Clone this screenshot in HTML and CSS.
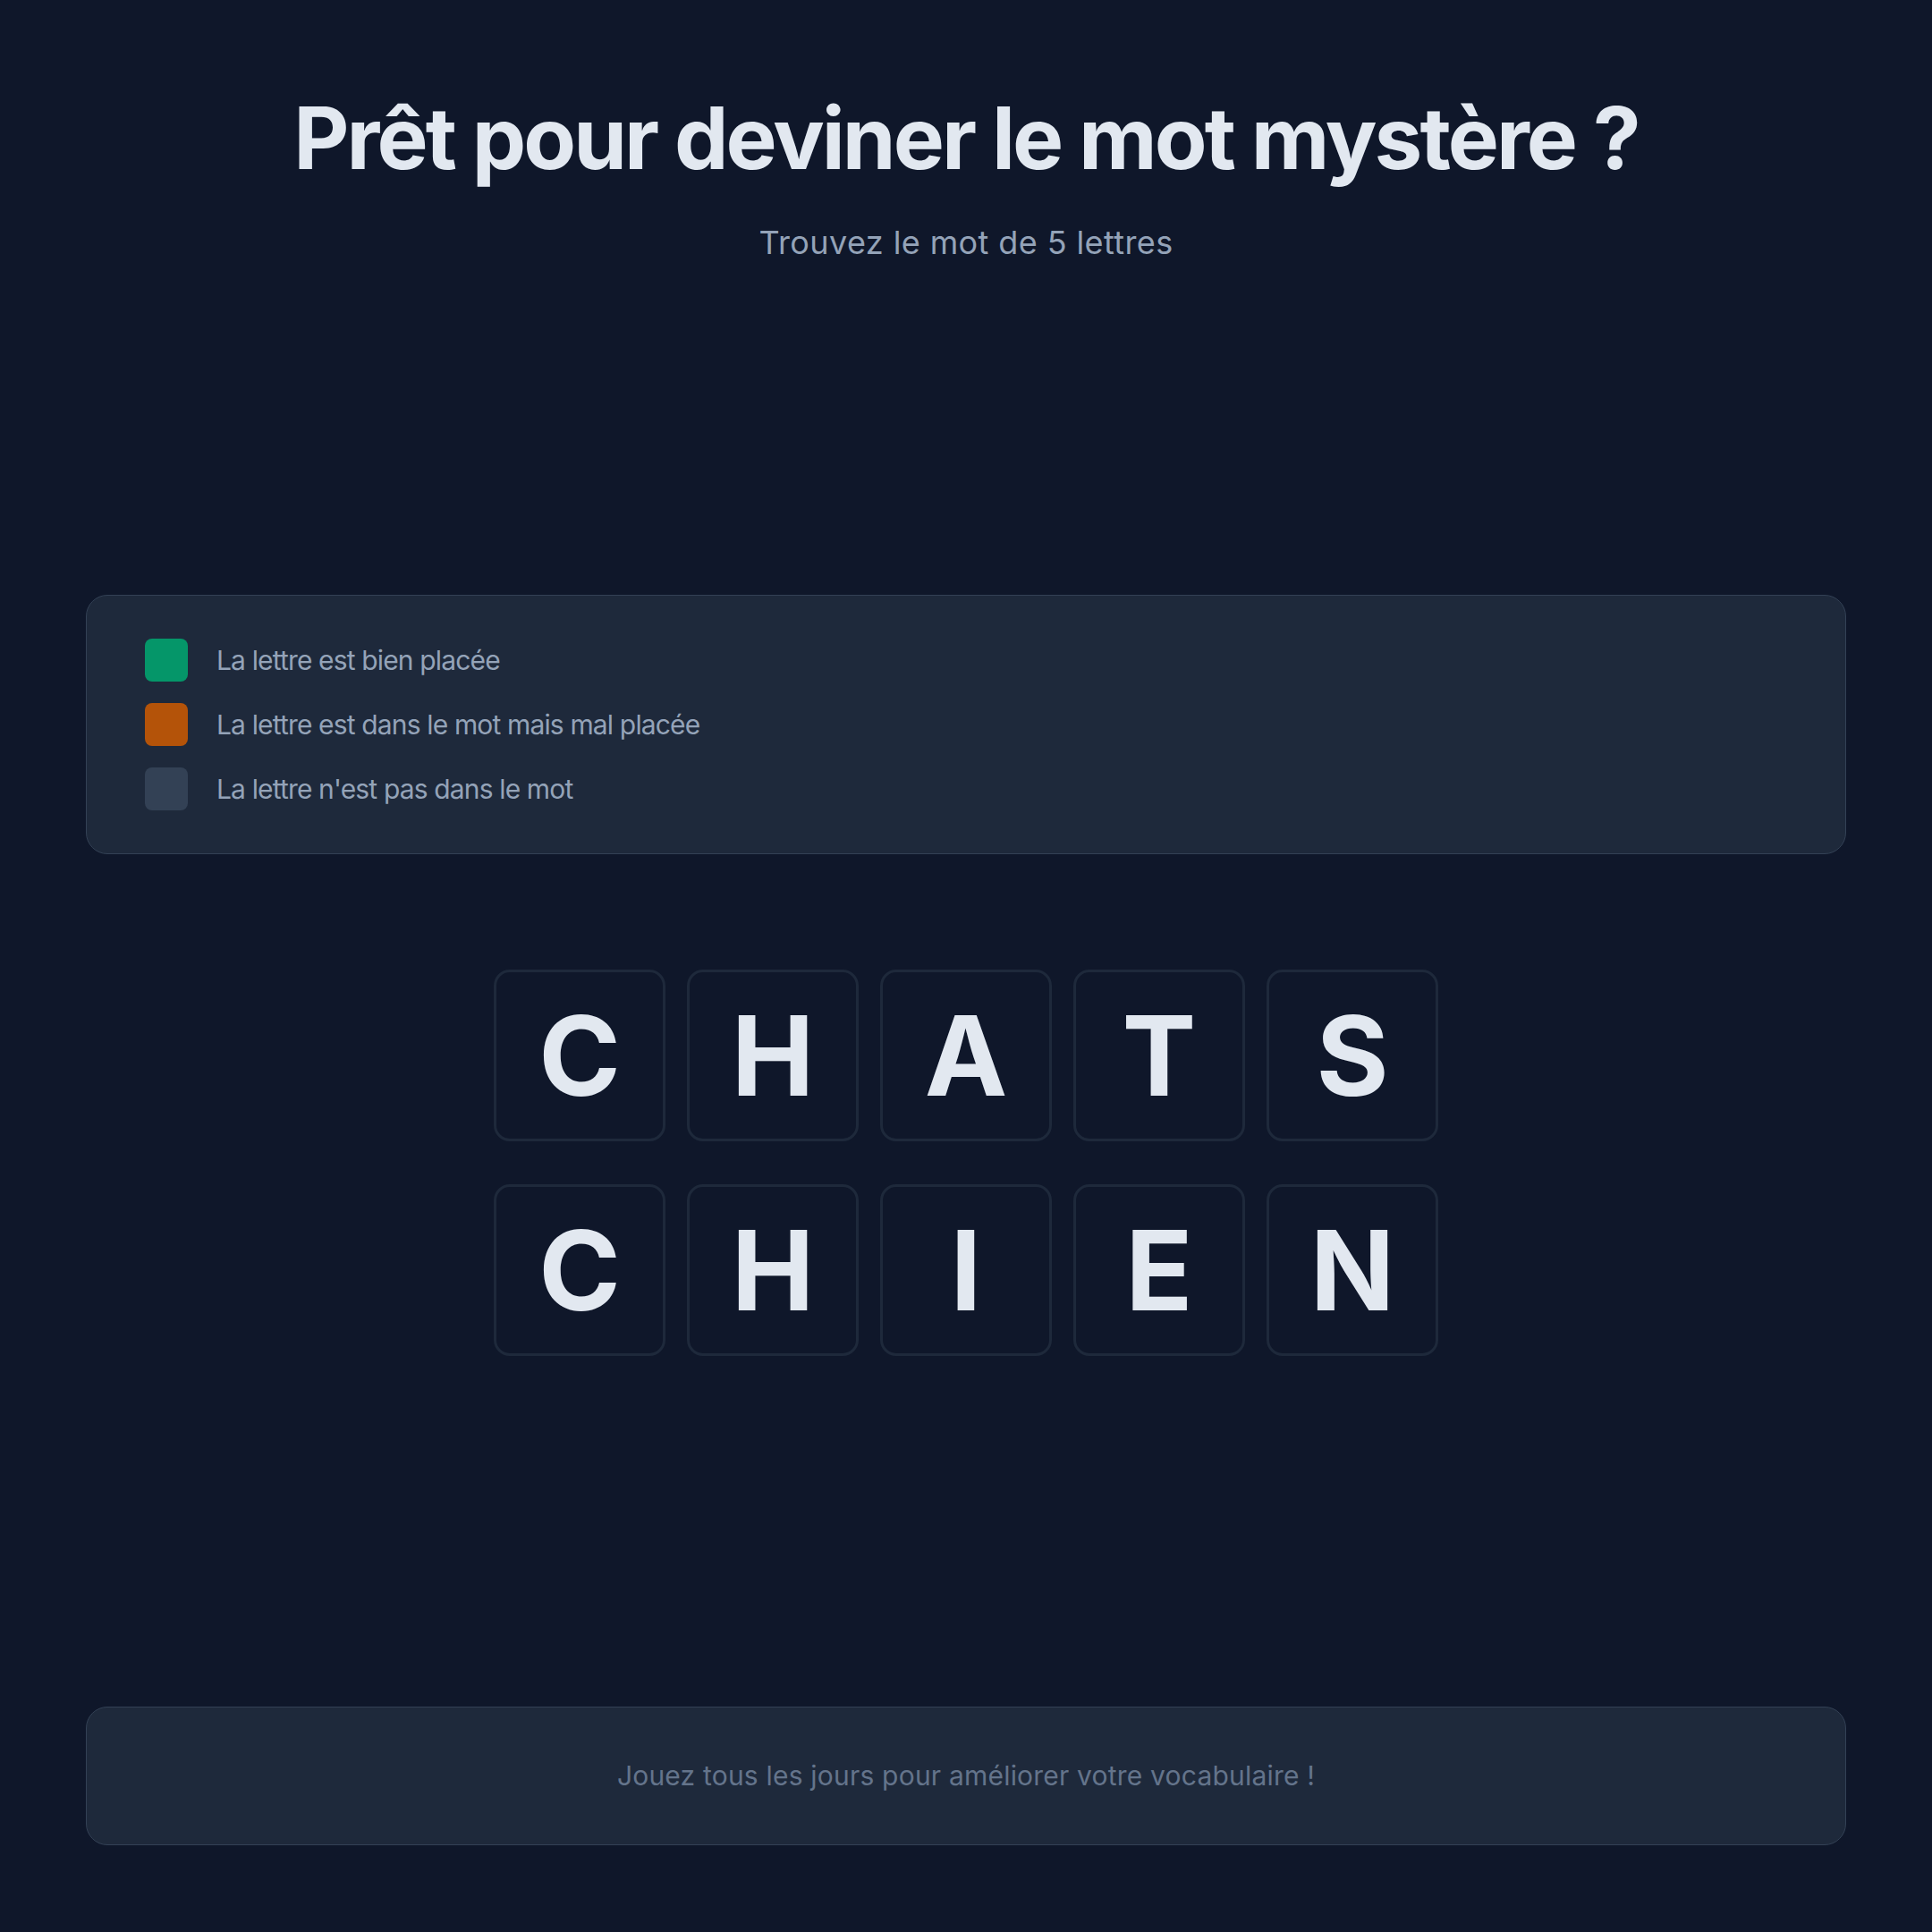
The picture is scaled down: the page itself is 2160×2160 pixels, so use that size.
FILE: index.html
```html
<!DOCTYPE html>
<html lang="fr">
<head>
<meta charset="utf-8">
<title>Mot mystère</title>
<link rel="stylesheet" href="styles.css">
</head>
<body>
<main class="page">
  <header class="header">
    <h1 class="title">Prêt pour deviner le mot mystère ?</h1>
    <p class="subtitle">Trouvez le mot de 5 lettres</p>
  </header>

  <section class="legend">
    <div class="legend-row"><span class="swatch swatch-green"></span><span class="legend-text">La lettre est bien placée</span></div>
    <div class="legend-row"><span class="swatch swatch-orange"></span><span class="legend-text">La lettre est dans le mot mais mal placée</span></div>
    <div class="legend-row"><span class="swatch swatch-gray"></span><span class="legend-text">La lettre n'est pas dans le mot</span></div>
  </section>

  <section class="board">
    <div class="word-row">
      <div class="tile">C</div><div class="tile">H</div><div class="tile">A</div><div class="tile">T</div><div class="tile">S</div>
    </div>
    <div class="word-row">
      <div class="tile">C</div><div class="tile">H</div><div class="tile">I</div><div class="tile">E</div><div class="tile">N</div>
    </div>
  </section>

  <footer class="footer">
    <p class="footer-text">Jouez tous les jours pour améliorer votre vocabulaire !</p>
  </footer>
</main>
</body>
</html>
```

FILE: styles.css
```css
* { box-sizing: border-box; }

html, body {
  margin: 0;
  padding: 0;
  background: #0f172a;
}

body {
  font-family: "Inter", "Noto Sans", "Liberation Sans", sans-serif;
  color: #e2e8f0;
}

.page {
  width: 2160px;
  min-height: 2160px;
  padding: 102px 96px 97px;
  display: flex;
  flex-direction: column;
}

.header {
  text-align: center;
}

.title {
  margin: 0;
  font-size: 96px;
  line-height: 1.1;
  font-weight: 700;
  letter-spacing: -2.93px;
  color: #e2e8f0;
}

.subtitle {
  margin: 36px 0 0;
  font-size: 36px;
  line-height: 54px;
  letter-spacing: 0.4px;
  color: #94a3b8;
}

.legend {
  margin-top: 367px;
  background: #1e293b;
  border: 1px solid #334155;
  border-radius: 24px;
  padding: 48px;
  display: flex;
  flex-direction: column;
  gap: 24px;
}

.legend-row {
  display: flex;
  align-items: center;
  gap: 32px;
  padding-left: 17px;
}

.swatch {
  width: 48px;
  height: 48px;
  border-radius: 8px;
  flex: none;
}

.swatch-green { background: #059669; }
.swatch-orange { background: #b45309; }
.swatch-gray { background: #334155; }

.legend-text {
  font-size: 30px;
  line-height: 45px;
  letter-spacing: -0.85px;
  color: #94a3b8;
  position: relative;
  top: 1px;
}

.board {
  margin-top: 129px;
  display: flex;
  flex-direction: column;
  align-items: center;
  gap: 48px;
}

.word-row {
  display: flex;
  gap: 24px;
}

.tile {
  width: 192px;
  height: 192px;
  border: 3px solid #1e293b;
  border-radius: 18px;
  display: flex;
  align-items: center;
  justify-content: center;
  font-size: 124px;
  font-weight: 700;
  color: #e2e8f0;
  line-height: 1;
}

.footer {
  margin-top: auto;
  background: #1e293b;
  border: 1px solid #334155;
  border-radius: 24px;
  padding: 48px;
  text-align: center;
}

.footer-text {
  margin: 0;
  font-size: 30px;
  line-height: 57px;
  letter-spacing: 0.2px;
  color: #64748b;
}
```
